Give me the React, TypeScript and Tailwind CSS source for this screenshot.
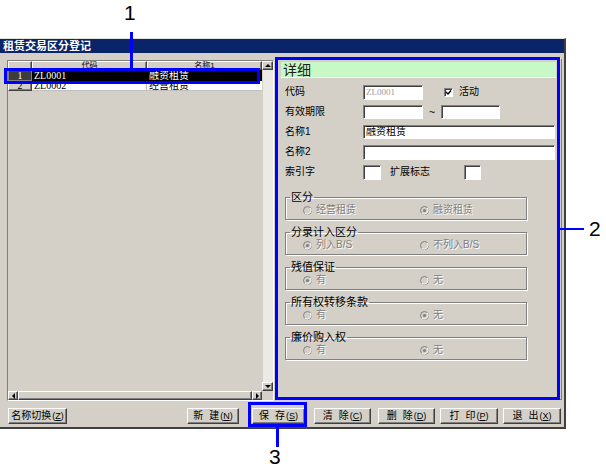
import React from "react"

const raised =
  "bg-[#D4D0C8] border border-t-white border-l-white border-b-[#404040] border-r-[#404040] shadow-[inset_-1px_-1px_0_#808080]"
const field =
  "bg-white border border-t-[#808080] border-l-[#808080] border-b-white border-r-white shadow-[inset_1px_1px_0_#404040]"
const grayText = "text-[#808080] [text-shadow:1px_1px_0_#ffffff]"

type Dir = "up" | "down" | "left" | "right"

function Arrow({ dir }: { dir: Dir }) {
  const pts: Record<Dir, string> = {
    up: "0,3 3,0 6,3",
    down: "0,0 3,3 6,0",
    left: "3,0 0,3 3,6",
    right: "0,0 3,3 0,6",
  }
  const vertical = dir === "up" || dir === "down"
  return (
    <svg width={vertical ? 6 : 3} height={vertical ? 3 : 6} viewBox={vertical ? "0 0 6 3" : "0 0 3 6"}>
      <polygon points={pts[dir]} fill="#000" />
    </svg>
  )
}

function Grid() {
  return (
    <div className="mt-[2px] ml-[7px] w-[267px] h-[341px] flex flex-col border border-t-[#808080] border-l-[#808080] border-b-white border-r-white">
      <div className="flex flex-1 min-h-0">
        <div className="flex-1 flex flex-col bg-[#D4D0C8]">
          {/* header */}
          <div className="flex h-[9px] text-[8px] leading-[7px]">
            <div className={`w-[24px] ${raised}`} />
            <div className={`w-[115px] ${raised} flex items-start justify-center`}>代码</div>
            <div className={`w-[115px] ${raised} flex items-start justify-center`}>名称1</div>
          </div>
          {/* row 1 (selected) */}
          <div className="flex h-[11px] text-[10px] leading-none">
            <div className="w-[24px] bg-[#3C3C3C] border border-[#808080] text-white flex items-center justify-center font-['Liberation_Serif',serif]">1</div>
            <div className="w-[115px] bg-black text-white flex items-center pl-[2px] font-['Liberation_Serif',serif]">ZL0001</div>
            <div className="w-[115px] bg-black text-white flex items-center pl-[2px]">融资租赁</div>
          </div>
          {/* row 2 */}
          <div className="flex h-[10px] text-[10px] leading-none">
            <div className={`w-[24px] ${raised} flex items-center justify-center font-['Liberation_Serif',serif]`}>2</div>
            <div className="w-[115px] bg-white border-r border-b border-[#C0C0C0] flex items-center pl-[2px] font-['Liberation_Serif',serif]">ZL0002</div>
            <div className="w-[115px] bg-white border-b border-[#C0C0C0] flex items-center pl-[2px]">经营租赁</div>
          </div>
          <div className="flex-1" />
        </div>
        {/* vertical scrollbar */}
        <div className="w-[11px] flex flex-col">
          <div className={`h-[9px] ${raised} flex items-center justify-center`}>
            <Arrow dir="up" />
          </div>
          <div className="flex-1 bg-[#ECEAE5] border-l border-[#D4D0C8]" />
          <div className={`h-[9px] ${raised} flex items-center justify-center`}>
            <Arrow dir="down" />
          </div>
        </div>
      </div>
      {/* horizontal scrollbar */}
      <div className="flex h-[9px]">
        <div className={`w-[10px] ${raised} flex items-center justify-center`}>
          <Arrow dir="left" />
        </div>
        <div className={`flex-1 ${raised}`} />
        <div className={`w-[10px] ${raised} flex items-center justify-center`}>
          <Arrow dir="right" />
        </div>
        <div className="w-[11px] bg-[#D4D0C8]" />
      </div>
    </div>
  )
}

function Radio({ checked, label }: { checked: boolean; label: string }) {
  return (
    <div className="flex items-center">
      <svg width="9" height="9" viewBox="0 0 9 9">
        <circle cx="4.5" cy="4.5" r="4" fill="#D4D0C8" stroke="#808080" strokeWidth="1" />
        <path d="M7.3 1.7 A4 4 0 0 1 1.7 7.3" fill="none" stroke="#ffffff" strokeWidth="1" />
        {checked && <circle cx="4.5" cy="4.5" r="1.6" fill="#808080" />}
      </svg>
      <span className={`ml-[4px] ${grayText}`}>{label}</span>
    </div>
  )
}

function Group({ title, a, b, sel }: { title: string; a: string; b: string; sel: 0 | 1 }) {
  return (
    <fieldset className="w-[242px] h-[29px] mb-[6px] border border-[#808080] shadow-[inset_1px_1px_0_#ffffff,1px_1px_0_#ffffff]">
      <legend className="ml-[4px] px-[1px] text-[11px] leading-[12px] text-black">{title}</legend>
      <div className="flex items-center h-[14px] pl-[17px] text-[10px] leading-none">
        <div className="w-[117px]">
          <Radio checked={sel === 0} label={a} />
        </div>
        <Radio checked={sel === 1} label={b} />
      </div>
    </fieldset>
  )
}

function Detail() {
  return (
    <div className="ml-[3px] w-[285px] h-[342px] border border-t-white border-l-white border-b-[#808080] border-r-[#808080] pt-[3px] pl-[3px] pr-[5px]">
      <div className="h-[16px] bg-[#C6F9C6] border-b border-b-white text-[14px] leading-none flex items-center pl-[2px] text-[#202020]">
        详细
      </div>
      <div className="mt-[4px] pl-[4px] text-[10px] leading-none">
        <div className="flex items-center h-[20px]">
          <div className="w-[78px]">代码</div>
          <div className={`w-[60px] h-[15px] ${field} flex items-center pl-[2px] text-[9px] text-[#9A9A9A] font-['Liberation_Serif',serif]`}>
            ZL0001
          </div>
          <div className={`ml-[21px] w-[9px] h-[9px] ${field} flex items-center justify-center`}>
            <svg width="7" height="7" viewBox="0 0 7 7">
              <path d="M1 3 L3 5 L6 1.5" fill="none" stroke="#000" strokeWidth="1.4" />
            </svg>
          </div>
          <div className="ml-[6px]">活动</div>
        </div>
        <div className="flex items-center h-[20px]">
          <div className="w-[78px]">有效期限</div>
          <div className={`w-[60px] h-[14px] ${field}`} />
          <div className="w-[18px] text-center text-[11px]">~</div>
          <div className={`w-[59px] h-[14px] ${field}`} />
        </div>
        <div className="flex items-center h-[20px]">
          <div className="w-[78px]">名称1</div>
          <div className={`w-[192px] h-[14px] ${field} flex items-center pl-[2px]`}>融资租赁</div>
        </div>
        <div className="flex items-center h-[20px]">
          <div className="w-[78px]">名称2</div>
          <div className={`w-[192px] h-[15px] ${field}`} />
        </div>
        <div className="flex items-center h-[20px]">
          <div className="w-[78px]">索引字</div>
          <div className={`w-[18px] h-[15px] ${field}`} />
          <div className="ml-[9px] w-[74px]">扩展标志</div>
          <div className={`w-[17px] h-[15px] ${field}`} />
        </div>

        <div className="mt-[9px]">
          <Group title="区分" a="经营租赁" b="融资租赁" sel={1} />
          <Group title="分录计入区分" a="列入B/S" b="不列入B/S" sel={0} />
          <Group title="残值保证" a="有" b="无" sel={0} />
          <Group title="所有权转移条款" a="有" b="无" sel={1} />
          <Group title="廉价购入权" a="有" b="无" sel={1} />
        </div>
      </div>
    </div>
  )
}

function Btn({ a, b, k, className }: { a: string; b?: string; k: string; className: string }) {
  return (
    <div className={`h-[16px] ${raised} flex items-center justify-center text-[10px] leading-none ${className}`}>
      <span>{a}</span>
      {b && <span className="ml-[6px]">{b}</span>}
      <span className="ml-[1px] text-[9px]">
        (<span className="underline">{k}</span>)
      </span>
    </div>
  )
}

export default function App() {
  return (
    <div className="relative w-[606px] h-[475px] bg-white overflow-hidden text-black font-['Liberation_Sans','Noto_Sans_CJK_SC',sans-serif]">
      {/* window */}
      <div className="mt-[38px] w-[566px] h-[391px] bg-[#D4D0C8] border-t border-t-[#E4E2DC] border-r-2 border-r-[#404040] border-b-2 border-b-[#404040] flex flex-col">
        <div className="h-[14px] w-[564px] bg-[#0A246A] text-white font-bold text-[11px] leading-none pl-[3px] flex items-center">
          租赁交易区分登记
        </div>
        <div className="flex items-start pt-[5px] h-[348px]">
          <Grid />
          <Detail />
        </div>
        <div className="flex mt-[7px]">
          <Btn a="名称切换" k="Z" className="ml-[8px] w-[59px]" />
          <Btn a="新" b="建" k="N" className="ml-[120px] w-[52px]" />
          <Btn a="保" b="存" k="S" className="ml-[13px] w-[53px]" />
          <Btn a="清" b="除" k="C" className="ml-[9px] w-[57px]" />
          <Btn a="删" b="除" k="D" className="ml-[7px] w-[57px]" />
          <Btn a="打" b="印" k="P" className="ml-[5px] w-[58px]" />
          <Btn a="退" b="出" k="X" className="ml-[5px] w-[58px]" />
        </div>
      </div>

      {/* callout annotations */}
      <div className="absolute left-[124px] top-[2px] text-[21px] leading-none">1</div>
      <div className="absolute left-[130px] top-[32px] w-[3px] h-[37px] bg-[#0000FF]" />
      <div className="absolute left-[4px] top-[68px] w-[256px] h-[16px] border-[3px] border-[#0000FF]" />

      <div className="absolute left-[275px] top-[57px] w-[285px] h-[343px] border-[3px] border-[#0000FF]" />
      <div className="absolute left-[559px] top-[228px] w-[25px] h-[2px] bg-[#0000FF]" />
      <div className="absolute left-[589px] top-[218px] text-[21px] leading-none">2</div>

      <div className="absolute left-[248px] top-[402px] w-[59px] h-[25px] border-[3px] border-[#0000FF]" />
      <div className="absolute left-[276px] top-[427px] w-[3px] h-[20px] bg-[#0000FF]" />
      <div className="absolute left-[269px] top-[446px] text-[21px] leading-none">3</div>
    </div>
  )
}
